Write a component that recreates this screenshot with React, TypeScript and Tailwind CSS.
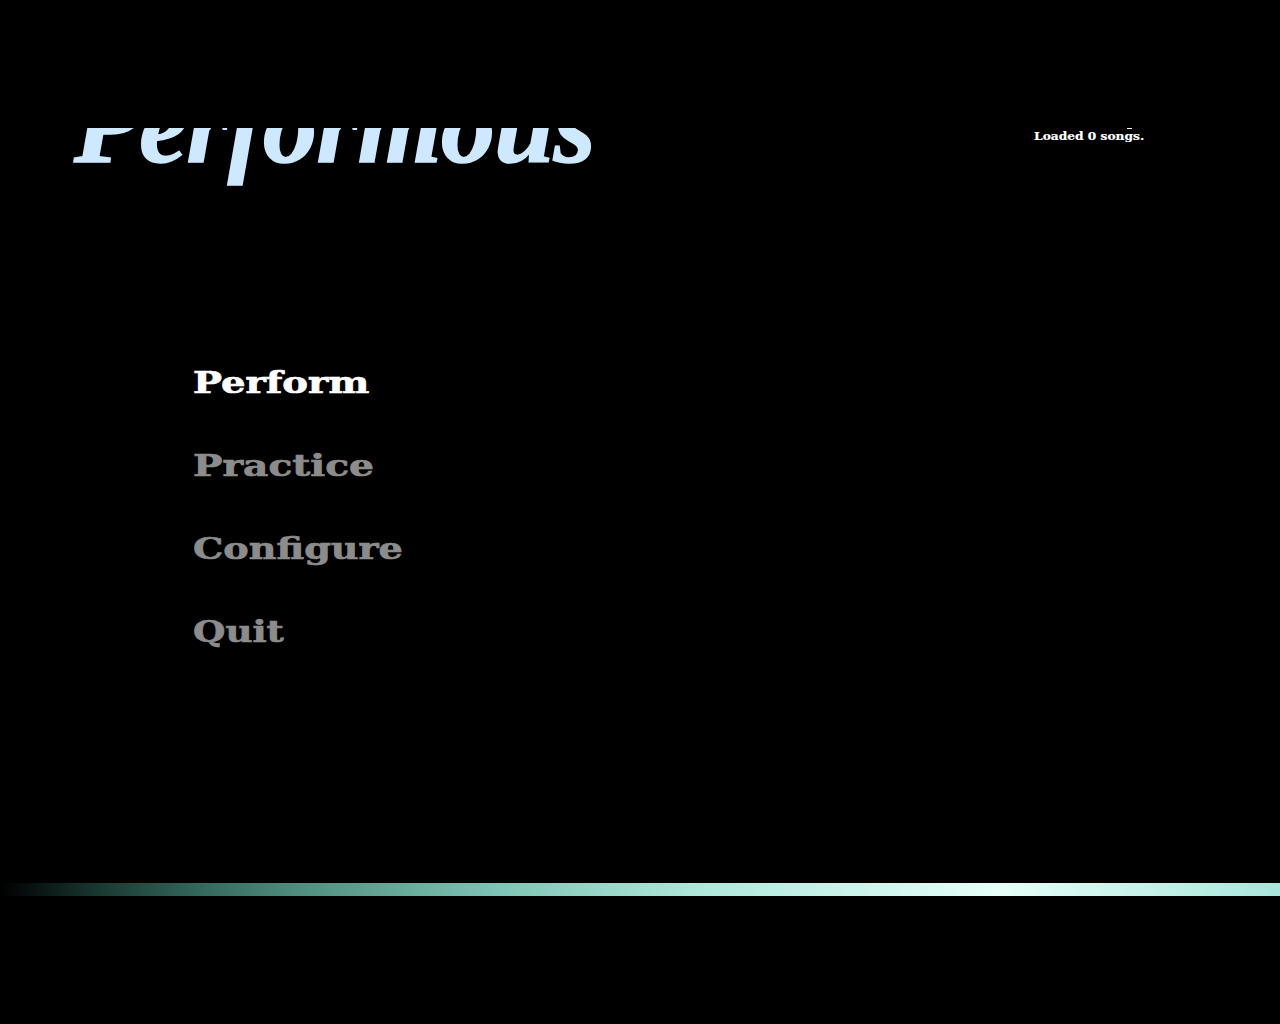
export default function App() {
  const items = [
    { t: "Perform", c: "text-white scale-x-[1.285]" },
    { t: "Practice", c: "text-[#8c8c8c] scale-x-[1.305]" },
    { t: "Configure", c: "text-[#8c8c8c] scale-x-[1.27]" },
    { t: "Quit", c: "text-[#8c8c8c] scale-x-[1.24]" },
  ];
  return (
    <div className="h-[1024px] w-[1280px] overflow-hidden bg-black flex flex-col">
      <div className="mt-[128px] h-[60px] flex justify-between overflow-hidden relative">
        <div className="ml-[74px] mt-[-56px] text-[#cde8ff] text-[108px] leading-[108px] font-bold italic whitespace-nowrap tracking-[-0.7px] [font-family:'Liberation_Serif',serif] [-webkit-text-stroke:1.5px_#cde8ff]">
          Performous
        </div>
        <div className="mr-[136px] mt-[1px] origin-right scale-x-[1.11] text-white text-[11px] leading-[16px] font-bold whitespace-nowrap [font-family:'DejaVu_Serif',serif] [-webkit-text-stroke:0.2px_white]">
          Loaded 0 songs.
        </div>
        <div className="absolute left-[1127px] top-0 h-px w-[5px] bg-white" />
      </div>
      <div className="mt-[175px] ml-[193px] flex flex-col gap-[43px]">
        {items.map(({ t, c }) => (
          <div
            key={t}
            className={
              "h-[40px] origin-left text-[30px] leading-[40px] font-bold whitespace-nowrap [font-family:'DejaVu_Serif',serif] [-webkit-text-stroke:0.7px_currentColor] " +
              c
            }
          >
            {t}
          </div>
        ))}
      </div>
      <div className="mt-[231px] h-[13px] w-full bg-[linear-gradient(90deg,#000000_0%,#1a3a33_8%,#356a5f_16%,#4f8f80_23.5%,#7fc5b5_39%,#b0e8dc_55%,#e6fff9_78%,#a8e6da_100%)]" />
    </div>
  );
}
